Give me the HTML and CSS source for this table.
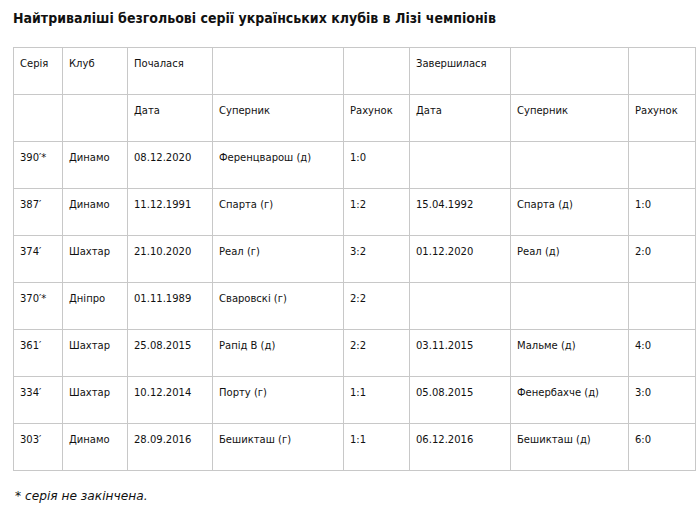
FILE: index.html
```html
<!DOCTYPE html>
<html lang="uk">
<head>
<meta charset="utf-8">
<link rel="stylesheet" href="styles.css">
</head>
<body>
<h2 class="title">Найтриваліші безгольові серії українських клубів в Лізі чемпіонів</h2>
<table class="stats">
  <colgroup>
    <col class="c1"><col class="c2"><col class="c3"><col class="c4"><col class="c5"><col class="c6"><col class="c7"><col class="c8">
  </colgroup>
  <tr><td>Серія</td><td>Клуб</td><td>Почалася</td><td></td><td></td><td>Завершилася</td><td></td><td></td></tr>
  <tr><td></td><td></td><td>Дата</td><td>Суперник</td><td>Рахунок</td><td>Дата</td><td>Суперник</td><td>Рахунок</td></tr>
  <tr><td>390′*</td><td>Динамо</td><td>08.12.2020</td><td>Ференцварош (д)</td><td>1:0</td><td></td><td></td><td></td></tr>
  <tr><td>387′</td><td>Динамо</td><td>11.12.1991</td><td>Спарта (г)</td><td>1:2</td><td>15.04.1992</td><td>Спарта (д)</td><td>1:0</td></tr>
  <tr><td>374′</td><td>Шахтар</td><td>21.10.2020</td><td>Реал (г)</td><td>3:2</td><td>01.12.2020</td><td>Реал (д)</td><td>2:0</td></tr>
  <tr><td>370′*</td><td>Дніпро</td><td>01.11.1989</td><td>Сваровскі (г)</td><td>2:2</td><td></td><td></td><td></td></tr>
  <tr><td>361′</td><td>Шахтар</td><td>25.08.2015</td><td>Рапід В (д)</td><td>2:2</td><td>03.11.2015</td><td>Мальме (д)</td><td>4:0</td></tr>
  <tr><td>334′</td><td>Шахтар</td><td>10.12.2014</td><td>Порту (г)</td><td>1:1</td><td>05.08.2015</td><td>Фенербахче (д)</td><td>3:0</td></tr>
  <tr><td>303′</td><td>Динамо</td><td>28.09.2016</td><td>Бешикташ (г)</td><td>1:1</td><td>06.12.2016</td><td>Бешикташ (д)</td><td>6:0</td></tr>
</table>
<p class="note">* серія не закінчена.</p>
</body>
</html>
```
FILE: styles.css
```css
html, body {
  margin: 0;
  padding: 0;
  background: #fff;
}
body {
  padding: 9px 6px 0 13px;
  font-family: "DejaVu Sans", Verdana, sans-serif;
  color: #111;
}
.title {
  margin: 0 0 20px 0;
  font-family: "DejaVu Sans Condensed", "DejaVu Sans", sans-serif;
  font-size: 14px;
  font-weight: bold;
  line-height: 18px;
  color: #111;
}
.stats {
  border-collapse: collapse;
  width: 682px;
  table-layout: fixed;
  font-size: 10px;
}
.stats td {
  border: 1px solid #c8c8c8;
  height: 47px;
  padding: 9px 6px 0 6px;
  vertical-align: top;
  line-height: 13px;
  box-sizing: border-box;
  white-space: nowrap;
}
.c1 { width: 49px; }
.c2 { width: 65px; }
.c3 { width: 85px; }
.c4 { width: 131px; }
.c5 { width: 66px; }
.c6 { width: 101px; }
.c7 { width: 118px; }
.c8 { width: 67px; }
.note {
  margin: 17px 0 0 2px;
  font-style: italic;
  font-size: 12.2px;
  line-height: 16px;
  color: #111;
}
```
